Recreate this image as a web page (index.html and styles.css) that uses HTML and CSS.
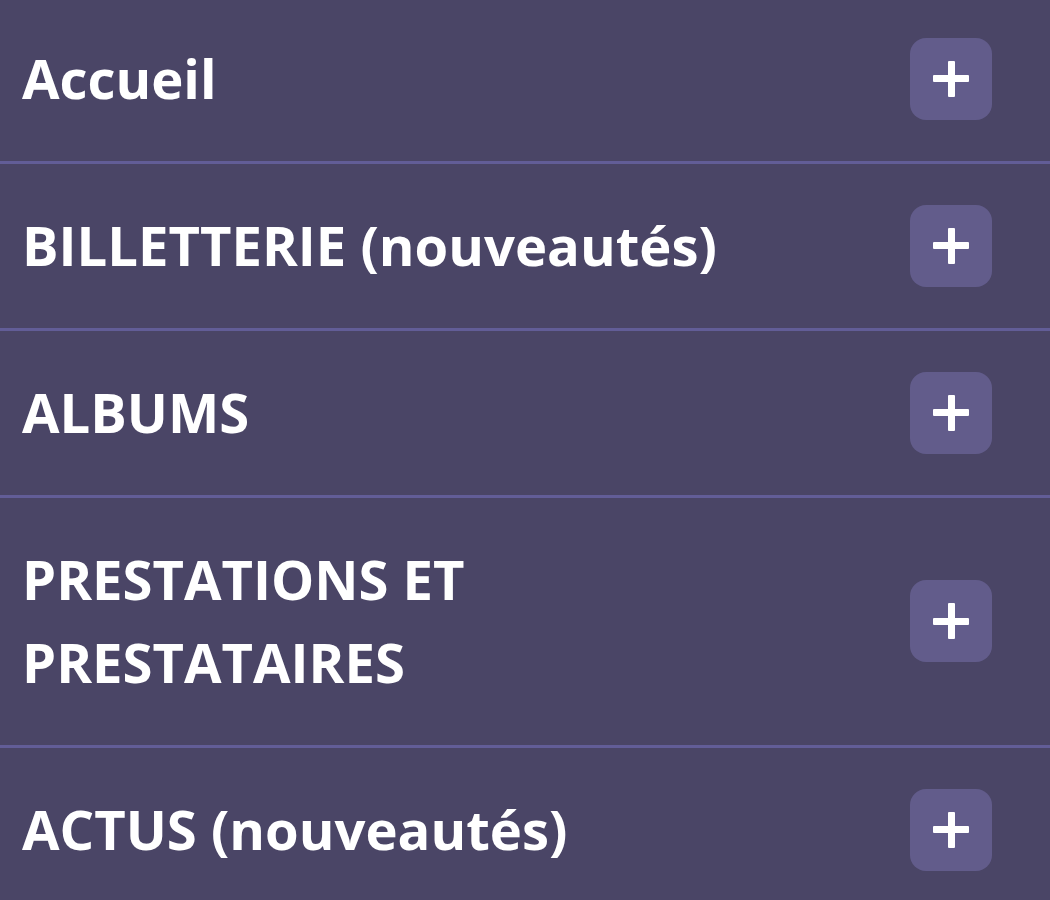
FILE: index.html
```html
<!DOCTYPE html>
<html lang="fr">
<head>
<meta charset="utf-8">
<title>Menu</title>
<link rel="stylesheet" href="styles.css">
</head>
<body>
<nav class="menu">
  <ul class="menu-list">
    <li class="menu-item"><a class="menu-link" href="#">Accueil</a><button class="toggle" aria-label="Ouvrir"><span class="plus"></span></button></li>
    <li class="menu-item"><a class="menu-link" href="#">BILLETTERIE (nouveautés)</a><button class="toggle" aria-label="Ouvrir"><span class="plus"></span></button></li>
    <li class="menu-item"><a class="menu-link" href="#">ALBUMS</a><button class="toggle" aria-label="Ouvrir"><span class="plus"></span></button></li>
    <li class="menu-item"><a class="menu-link narrow" href="#">PRESTATIONS ET PRESTATAIRES</a><button class="toggle" aria-label="Ouvrir"><span class="plus"></span></button></li>
    <li class="menu-item"><a class="menu-link" href="#">ACTUS (nouveautés)</a><button class="toggle" aria-label="Ouvrir"><span class="plus"></span></button></li>
  </ul>
</nav>
</body>
</html>
```

FILE: styles.css
```css
html, body {
  margin: 0;
  padding: 0;
  background: #4a4566;
  height: 100%;
  overflow: hidden;
}
.menu {
  background: #4a4566;
  font-family: "Open Sans", "Noto Sans", sans-serif;
}
.menu-list {
  list-style: none;
  margin: -3px 0 0 0;
  padding: 0;
}
.menu-item {
  display: flex;
  align-items: center;
  justify-content: space-between;
  padding: 40px 58px 41px 22px;
  border-bottom: 3px solid #625d97;
}
.menu-link {
  color: #ffffff;
  text-decoration: none;
  font-weight: 700;
  font-size: 54.4px;
  line-height: 83px;
}
.menu-link.narrow {
  max-width: 500px;
}
.toggle {
  flex: none;
  width: 82px;
  height: 82px;
  border: none;
  border-radius: 16px;
  background: #625c8b;
  display: flex;
  align-items: center;
  justify-content: center;
  padding: 0;
  cursor: pointer;
}
.plus {
  position: relative;
  width: 36px;
  height: 36px;
  display: block;
}
.plus::before,
.plus::after {
  content: "";
  position: absolute;
  background: #ffffff;
  border-radius: 1px;
}
.plus::before {
  left: 0;
  right: 0;
  top: 14.5px;
  height: 7px;
}
.plus::after {
  top: 0;
  bottom: 0;
  left: 14.5px;
  width: 7px;
}
```
